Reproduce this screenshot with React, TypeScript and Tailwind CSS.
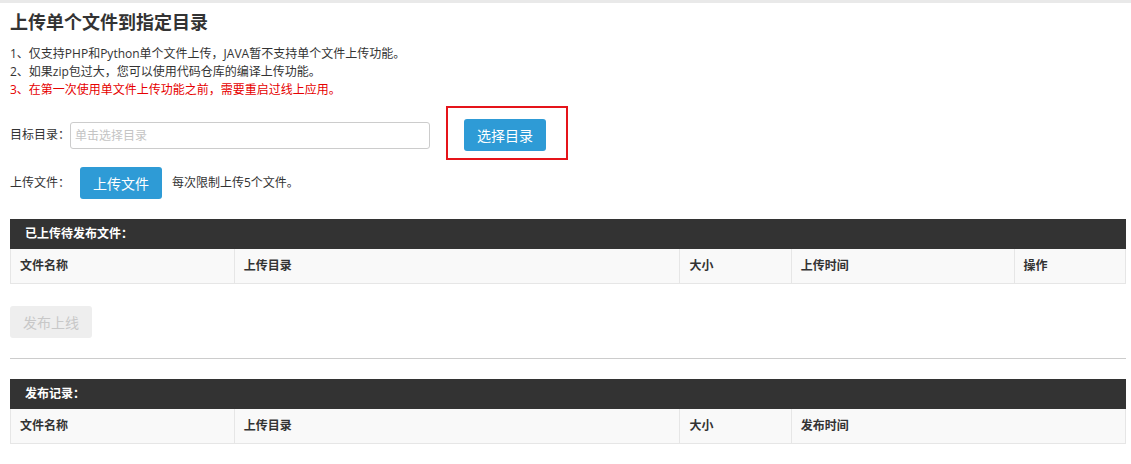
import React from "react";

const font = { fontFamily: '"Open Sans", "Noto Sans CJK SC", sans-serif' };

function Table({ title, cols }: { title: string; cols: { label: string; w: string }[] }) {
  return (
    <div>
      <div className="h-[30px] bg-[#333333] flex items-center pl-[15px] text-white text-[12px] font-bold">
        {title}
      </div>
      <div className="flex h-[35px] bg-[#f9f9f9] border border-t-0 border-[#e6e6e6]">
        {cols.map((c, i) => (
          <div
            key={i}
            className={`${c.w} flex items-center pl-[9px] text-[12px] font-bold text-[#333] ${
              i > 0 ? "border-l border-[#e6e6e6]" : ""
            }`}
          >
            {c.label}
          </div>
        ))}
      </div>
    </div>
  );
}

export default function App() {
  return (
    <div className="w-[1131px] h-[464px] bg-white overflow-hidden" style={font}>
      <div className="h-[3px] bg-[#e9e9e9]" />
      <div className="pl-[10px] pr-[5px]">
        <h1 className="mt-[6px] h-[26px] leading-[26px] text-[18px] font-bold text-[#333]">
          上传单个文件到指定目录
        </h1>
        <div className="mt-[10px] text-[12px] leading-[18px] text-[#333]">
          <p>1、仅支持PHP和Python单个文件上传，JAVA暂不支持单个文件上传功能。</p>
          <p>2、如果zip包过大，您可以使用代码仓库的编译上传功能。</p>
          <p className="text-[#e60000]">3、在第一次使用单文件上传功能之前，需要重启过线上应用。</p>
        </div>
        <div className="mt-[7px] flex items-center">
          <span className="w-[60px] mt-[4px] text-[12px] text-[#333]">目标目录：</span>
          <input
            className="w-[360px] h-[27px] mt-[4px] border border-[#cccccc] rounded-[3px] px-[4px] text-[12px] outline-none placeholder:text-[#c4c4c4]"
            placeholder="单击选择目录"
          />
          <div className="ml-[16px] border-2 border-[#e5141a] pt-[11px] pb-[7px] pl-[16px] pr-[20px]">
            <button className="block w-[82px] h-[32px] rounded-[3px] bg-[#2e9bd6] text-white text-[14px]">
              选择目录
            </button>
          </div>
        </div>
        <div className="mt-[7px] flex items-center">
          <span className="w-[70px] text-[12px] text-[#333]">上传文件：</span>
          <button className="w-[82px] h-[32px] rounded-[3px] bg-[#2e9bd6] text-white text-[14px]">
            上传文件
          </button>
          <span className="ml-[10px] text-[12px] text-[#333]">每次限制上传5个文件。</span>
        </div>
        <div className="mt-[20px]">
          <Table
            title="已上传待发布文件："
            cols={[
              { label: "文件名称", w: "w-[20%]" },
              { label: "上传目录", w: "w-[40%]" },
              { label: "大小", w: "w-[10%]" },
              { label: "上传时间", w: "w-[20%]" },
              { label: "操作", w: "w-[10%]" },
            ]}
          />
        </div>
        <button className="block mt-[22px] w-[82px] h-[32px] rounded-[3px] bg-[#eeeeee] text-[#c8c8c8] text-[14px]">
          发布上线
        </button>
        <div className="mt-[20px] h-px bg-[#cccccc]" />
        <div className="mt-[20px]">
          <Table
            title="发布记录："
            cols={[
              { label: "文件名称", w: "w-[20%]" },
              { label: "上传目录", w: "w-[40%]" },
              { label: "大小", w: "w-[10%]" },
              { label: "发布时间", w: "w-[30%]" },
            ]}
          />
        </div>
      </div>
    </div>
  );
}
